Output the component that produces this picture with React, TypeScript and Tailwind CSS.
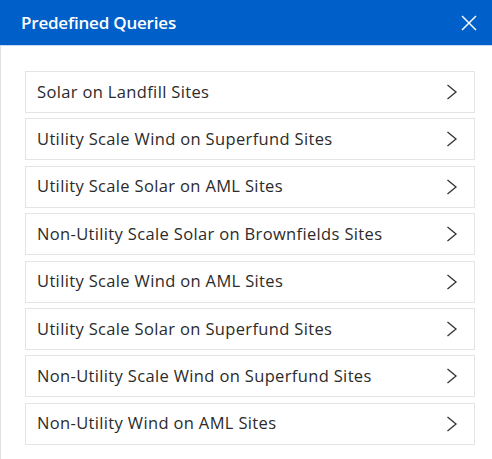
const queries = [
  'Solar on Landfill Sites',
  'Utility Scale Wind on Superfund Sites',
  'Utility Scale Solar on AML Sites',
  'Non-Utility Scale Solar on Brownfields Sites',
  'Utility Scale Wind on AML Sites',
  'Utility Scale Solar on Superfund Sites',
  'Non-Utility Scale Wind on Superfund Sites',
  'Non-Utility Wind on AML Sites',
]

function Chevron() {
  return (
    <svg width="12" height="16" viewBox="0 0 12 16" fill="none" stroke="#333" strokeWidth="1.3">
      <polyline points="1.5,1 10,8 1.5,15" />
    </svg>
  )
}

function CloseIcon() {
  return (
    <svg width="16" height="16" viewBox="0 0 16 16" fill="none" stroke="#fff" strokeWidth="1.4">
      <line x1="1" y1="1" x2="15" y2="15" />
      <line x1="15" y1="1" x2="1" y2="15" />
    </svg>
  )
}

export default function App() {
  return (
    <div className="w-[492px] h-[459px] bg-white overflow-hidden" style={{ fontFamily: '"Open Sans", Lato, sans-serif' }}>
      {/* Header */}
      <div className="h-[46px] bg-[#005fc9] flex items-center justify-between pl-[21px] pr-[15px] border-b border-[#c7dbf3]">
        <h1 className="text-white text-[17px] font-semibold tracking-[-0.2px]">Predefined Queries</h1>
        <CloseIcon />
      </div>

      {/* List */}
      <div className="h-[413px] border-l border-[#e0e0e0] pl-[24px] pr-[17px] pt-[25px]">
        <ul className="flex flex-col gap-[5.4px]">
          {queries.map((q) => (
            <li
              key={q}
              className="h-[42px] border border-[#e4e4e4] flex items-center justify-between pl-[11px] pr-[16px] text-[16.5px] tracking-[0.35px] text-[#2b2b2b]"
            >
              <span>{q}</span>
              <Chevron />
            </li>
          ))}
        </ul>
      </div>
    </div>
  )
}
